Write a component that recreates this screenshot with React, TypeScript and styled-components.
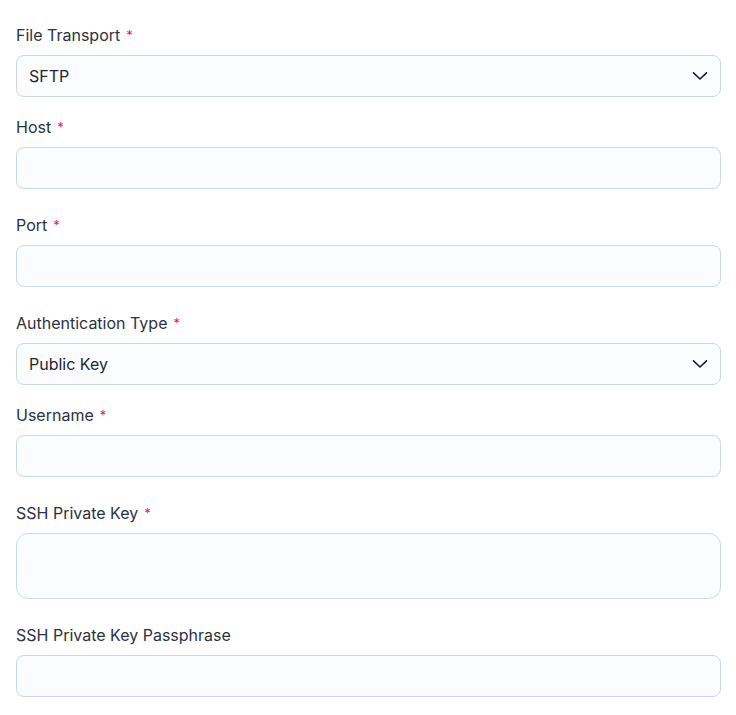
import React from "react";
import styled, { createGlobalStyle } from "styled-components";

const GlobalStyle = createGlobalStyle`
  body {
    margin: 0;
    background: #ffffff;
    font-family: Inter, "Noto Sans", sans-serif;
    color: #2b3240;
  }
`;

const Form = styled.form`
  display: flex;
  flex-direction: column;
  gap: 20px;
  width: 705px;
  padding: 25px 0 0 16px;
`;

const Field = styled.div<{ $spaced?: boolean }>`
  display: flex;
  flex-direction: column;
  gap: 10px;
  padding-bottom: ${(p) => (p.$spaced ? "6px" : "0")};
`;

const Label = styled.label`
  font-size: 16px;
  line-height: 20px;
  color: #2b3240;
  display: flex;
  align-items: center;
  gap: 6px;
`;

const Required = styled.span`
  color: #e0245e;
  font-size: 13px;
`;

const controlBase = `
  box-sizing: border-box;
  width: 100%;
  background: #fbfcfd;
  border: 1px solid #cdd7e4;
  font-family: Inter, "Noto Sans", sans-serif;
  font-size: 16px;
  color: #1f2633;
  outline: none;
`;

const Input = styled.input`
  ${controlBase}
  height: 42px;
  border-radius: 8px;
  padding: 0 12px;
`;

const TextArea = styled.textarea`
  ${controlBase}
  height: 66px;
  border-radius: 12px;
  padding: 10px 12px;
  resize: none;
  display: block;
`;

const SelectBox = styled.div`
  ${controlBase}
  height: 42px;
  border-radius: 8px;
  padding: 0 12px;
  display: flex;
  align-items: center;
  justify-content: space-between;
`;

const Chevron = () => (
  <svg width="16" height="16" viewBox="0 0 16 16" fill="none">
    <path
      d="M1.5 4.8 L8 11 L14.5 4.8"
      stroke="#1e2633"
      strokeWidth="1.7"
      strokeLinecap="round"
      strokeLinejoin="round"
    />
  </svg>
);

const Select: React.FC<{ value: string }> = ({ value }) => (
  <SelectBox>
    <span>{value}</span>
    <Chevron />
  </SelectBox>
);

const FieldLabel: React.FC<{ text: string; required?: boolean }> = ({
  text,
  required,
}) => (
  <Label>
    {text}
    {required && <Required>*</Required>}
  </Label>
);

export default function App() {
  return (
    <>
      <GlobalStyle />
      <Form>
        <Field>
          <FieldLabel text="File Transport" required />
          <Select value="SFTP" />
        </Field>
        <Field $spaced>
          <FieldLabel text="Host" required />
          <Input />
        </Field>
        <Field $spaced>
          <FieldLabel text="Port" required />
          <Input />
        </Field>
        <Field>
          <FieldLabel text="Authentication Type" required />
          <Select value="Public Key" />
        </Field>
        <Field $spaced>
          <FieldLabel text="Username" required />
          <Input />
        </Field>
        <Field $spaced>
          <FieldLabel text="SSH Private Key" required />
          <TextArea />
        </Field>
        <Field>
          <FieldLabel text="SSH Private Key Passphrase" />
          <Input />
        </Field>
      </Form>
    </>
  );
}
